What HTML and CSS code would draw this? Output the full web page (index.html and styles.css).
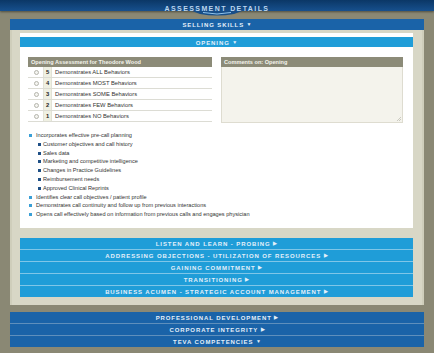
FILE: index.html
```html
<!DOCTYPE html>
<html>
<head>
<meta charset="utf-8">
<link rel="stylesheet" href="styles.css">
</head>
<body>
<header class="top">
  <span class="top-title">ASSESSMENT DETAILS</span>
  <svg class="notch" width="50" height="5" viewBox="0 0 50 5">
    <path d="M0 0 H50 L42 3 Q25 6 8 3 Z" fill="#174e88"/>
    <path d="M11 1.5 Q25 4.5 39 1.5" stroke="#8fc3ec" stroke-width="1" fill="none"/>
  </svg>
</header>
<main class="main">
  <div class="bar bar-dark">SELLING SKILLS <span class="arr">&#9660;</span></div>
  <section class="panel">
    <div class="card">
      <div class="bar bar-light">OPENING <span class="arr">&#9660;</span></div>
      <div class="grid">
        <div class="rating">
          <div class="rh">Opening Assessment for Theodore Wood</div>
          <div class="row"><span class="radio"></span><span class="num">5</span><span class="lbl">Demonstrates ALL Behaviors</span></div>
          <div class="row"><span class="radio"></span><span class="num">4</span><span class="lbl">Demonstrates MOST Behaviors</span></div>
          <div class="row"><span class="radio"></span><span class="num">3</span><span class="lbl">Demonstrates SOME Behaviors</span></div>
          <div class="row"><span class="radio"></span><span class="num">2</span><span class="lbl">Demonstrates FEW Behaviors</span></div>
          <div class="row"><span class="radio"></span><span class="num">1</span><span class="lbl">Demonstrates NO Behaviors</span></div>
        </div>
        <div class="comments">
          <div class="rh">Comments on: Opening</div>
          <div class="cbody">
            <svg class="grip" width="5" height="5" viewBox="0 0 5 5"><path d="M1 5 L5 1 M3 5 L5 3" stroke="#b9b8ad" stroke-width="0.7"/></svg>
          </div>
        </div>
      </div>
      <ul class="list">
        <li>Incorporates effective pre-call planning
          <ul class="sub">
            <li>Customer objectives and call history</li>
            <li>Sales data</li>
            <li>Marketing and competitive intelligence</li>
            <li>Changes in Practice Guidelines</li>
            <li>Reimbursement needs</li>
            <li>Approved Clinical Reprints</li>
          </ul>
        </li>
        <li>Identifies clear call objectives / patient profile</li>
        <li>Demonstrates call continuity and follow up from previous interactions</li>
        <li>Opens call effectively based on information from previous calls and engages physician</li>
      </ul>
    </div>
    <div class="stack stack-light">
      <div class="bar bar-light">LISTEN AND LEARN - PROBING <span class="arr">&#9654;</span></div>
      <div class="bar bar-light">ADDRESSING OBJECTIONS - UTILIZATION OF RESOURCES <span class="arr">&#9654;</span></div>
      <div class="bar bar-light">GAINING COMMITMENT <span class="arr">&#9654;</span></div>
      <div class="bar bar-light">TRANSITIONING <span class="arr">&#9654;</span></div>
      <div class="bar bar-light">BUSINESS ACUMEN - STRATEGIC ACCOUNT MANAGEMENT <span class="arr">&#9654;</span></div>
    </div>
  </section>
  <div class="stack stack-dark">
    <div class="bar bar-dark">PROFESSIONAL DEVELOPMENT <span class="arr">&#9654;</span></div>
    <div class="bar bar-dark">CORPORATE INTEGRITY <span class="arr">&#9654;</span></div>
    <div class="bar bar-dark">TEVA COMPETENCIES <span class="arr">&#9660;</span></div>
  </div>
</main>
</body>
</html>
```
FILE: styles.css
```css
* { box-sizing: border-box; }
html, body { margin: 0; padding: 0; }
body {
  width: 434px;
  height: 353px;
  overflow: hidden;
  background: #8a8874;
  font-family: "Liberation Sans", Arial, sans-serif;
}
.top {
  position: relative;
  height: 11px;
  background: linear-gradient(#0b3766, #17508d);
  box-shadow: 0 1px 2px rgba(40,40,30,0.6);
  text-align: center;
  line-height: 11px;
}
.top-title {
  color: #bcd6ee;
  font-size: 7px;
  font-weight: bold;
  letter-spacing: 1.4px;
}
.notch {
  position: absolute;
  left: 192px;
  top: 11px;
}
.main {
  margin: 8px 10px 0 10px;
}
.bar {
  height: 11px;
  line-height: 11px;
  text-align: center;
  color: #e4f0fa;
  font-size: 6px;
  font-weight: bold;
  letter-spacing: 0.9px;
  white-space: nowrap;
}
.arr { font-size: 5px; letter-spacing: 0; vertical-align: 0.5px; }
.bar-dark { background: #1a63a8; }
.bar-light { background: #1f9dd8; height: 11px; }
.panel {
  background: #d8d7c6;
  border-left: 2px solid #cfcebb;
  border-right: 2px solid #cfcebb;
  padding: 3px 9px 8px 8px;
}
.card {
  background: #fff;
  padding: 4px 0 9px 0;
}
.card > .bar-light { height: 10px; line-height: 10px; }
.grid {
  display: grid;
  grid-template-columns: 184px 182px;
  column-gap: 9px;
  margin: 10px 0 0 8px;
}
.rh {
  height: 10px;
  line-height: 10px;
  background: #8c8b78;
  color: #f4f4ec;
  font-size: 5.6px;
  font-weight: bold;
  padding-left: 3px;
}
.row {
  display: flex;
  align-items: center;
  height: 11px;
  border-bottom: 1px solid #dcdcd4;
  font-size: 5.8px;
  color: #333;
}
.radio {
  width: 5px;
  height: 5px;
  border-radius: 50%;
  border: 0.6px solid #b4b4ac;
  background: #f4f4f0;
  margin: 0 0 0 6px;
}
.num {
  width: 9px;
  height: 100%;
  margin-left: 4px;
  background: #eff0e2;
  border-left: 1px solid #e2e2d6;
  border-right: 1px solid #e2e2d6;
  text-align: center;
  line-height: 10px;
  font-weight: bold;
  color: #222;
}
.lbl { margin-left: 3px; }
.comments { height: 66px; display: flex; flex-direction: column; }
.cbody {
  position: relative;
  flex: 1;
  background: #f4f3ec;
  border: 1px solid #dedcd0;
  border-top: none;
}
.grip { position: absolute; right: 1px; bottom: 1px; }
.list {
  list-style: none;
  margin: 8px 0 0 0;
  padding: 0 0 0 9px;
  font-size: 5.6px;
  line-height: 8.8px;
  color: #333;
}
.list li { position: relative; padding-left: 7px; }
.list > li::before {
  content: "";
  position: absolute;
  left: 0;
  top: 3px;
  width: 3px;
  height: 3px;
  background: #3a9fd6;
}
.sub { list-style: none; margin: 0; padding: 0 0 0 2px; }
.sub li { padding-left: 5px; }
.sub li::before {
  content: "";
  position: absolute;
  left: 0;
  top: 3px;
  width: 3px;
  height: 3px;
  background: #1e4f86;
}
.stack-light { margin-top: 10px; }
.stack-light .bar + .bar { border-top: 1px solid #7fc6e8; height: 12px; line-height: 11px; }
.stack-dark { margin-top: 7px; }
.stack-dark .bar + .bar { border-top: 1px solid #5e8fbc; height: 12px; line-height: 11px; }
```
